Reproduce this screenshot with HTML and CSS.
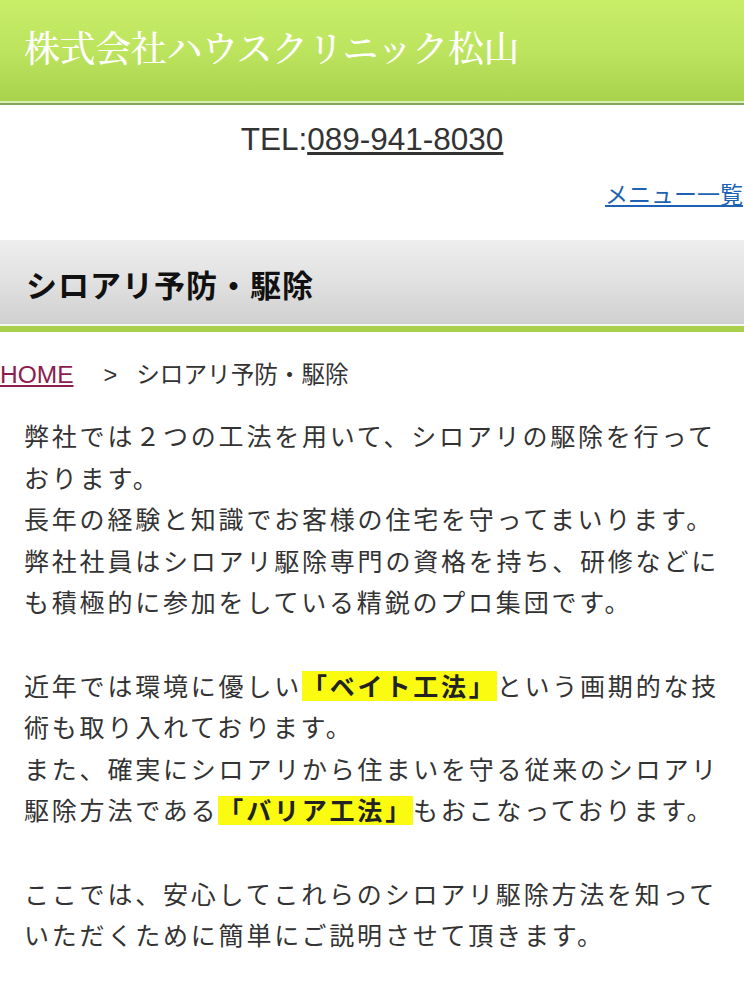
FILE: index.html
```html
<!DOCTYPE html>
<html lang="ja">
<head>
<meta charset="utf-8">
<title>シロアリ予防・駆除｜株式会社ハウスクリニック松山</title>
<link rel="stylesheet" href="styles.css">
</head>
<body>
<header class="site-header">
  <h1 class="site-title">株式会社ハウスクリニック松山</h1>
</header>
<div class="tel">TEL:<a class="tel-link" href="#">089-941-8030</a></div>
<div class="menu-row"><a class="menu-link" href="#">メニュー一覧</a></div>
<h2 class="page-title">シロアリ予防・駆除</h2>
<nav class="crumbs"><a class="crumb-home" href="#">HOME</a><span class="crumb-sep">&gt;</span><span class="crumb-current">シロアリ予防・駆除</span></nav>
<main class="content">
  <p class="body-text">弊社では２つの工法を用いて、シロアリの駆除を行っております。<br>長年の経験と知識でお客様の住宅を守ってまいります。<br>弊社社員はシロアリ駆除専門の資格を持ち、研修などにも積極的に参加をしている精鋭のプロ集団です。<br><br>近年では環境に優しい<span class="hl">「ベイト工法」</span>という画期的な技術も取り入れております。<br>また、確実にシロアリから住まいを守る従来のシロアリ駆除方法である<span class="hl">「バリア工法」</span>もおこなっております。<br><br>ここでは、安心してこれらのシロアリ駆除方法を知っていただくために簡単にご説明させて頂きます。</p>
</main>
</body>
</html>
```
FILE: styles.css
```css
html, body {
  margin: 0;
  padding: 0;
  background: #ffffff;
}
body {
  font-family: "Noto Sans CJK JP", "Liberation Sans", sans-serif;
  color: #333333;
  overflow-x: hidden;
}
.site-header {
  background: linear-gradient(to bottom, #c8ee68 0%, #bde45e 50%, #a9d24d 100%);
  border-bottom: 2px solid #d9efb0;
  box-shadow: 0 2px 0 #85a55a;
  margin-bottom: 2px;
  padding: 0 24px 8px;
  height: 93px;
}
.site-title {
  margin: 0;
  font-family: "Noto Serif CJK JP", "Liberation Serif", "Noto Sans CJK JP", serif;
  font-weight: 500;
  font-size: 36px;
  letter-spacing: -0.4px;
  line-height: 93px;
  color: #ffffff;
  white-space: nowrap;
}
.tel {
  margin-top: 18px;
  text-align: center;
  font-family: "Liberation Sans", sans-serif;
  font-size: 31.5px;
  line-height: 36px;
  color: #333333;
}
.tel-link {
  color: #333333;
  text-decoration: underline;
}
.menu-row {
  margin-top: 19px;
  text-align: right;
  font-size: 23px;
  line-height: 34px;
  padding-right: 1px;
}
.menu-link {
  color: #1d62b3;
  text-decoration: underline;
}
.page-title {
  margin: 30px 0 0;
  padding: 3px 0 2px 26px;
  font-size: 31px;
  font-weight: bold;
  letter-spacing: 1px;
  line-height: 81px;
  color: #111111;
  background: linear-gradient(to bottom, #eeeeee 0%, #e2e2e2 45%, #cfcfcf 100%);
  box-shadow: inset 0 -2px 0 #f4f7ec;
  border-bottom: 6px solid #a8d04c;
}
.crumbs {
  margin-top: 24px;
  font-size: 23.6px;
  line-height: 34px;
  color: #333333;
  white-space: nowrap;
}
.crumb-home {
  font-family: "Liberation Sans", sans-serif;
  font-size: 24.5px;
  color: #8c1d50;
  text-decoration: underline;
}
.crumb-sep {
  font-family: "Liberation Sans", sans-serif;
  margin-left: 30px;
  margin-right: 19px;
}
.content {
  margin-top: 23px;
  padding: 0 24px;
}
.body-text {
  margin: 0;
  font-size: 25px;
  letter-spacing: 2.8px;
  line-height: 41.6px;
  color: #333333;
}
.hl {
  font-weight: bold;
  color: #222222;
  background: linear-gradient(to bottom, transparent 4.5px, #fbfb12 4.5px, #fbfb12 34.5px, transparent 34.5px);
}
```
